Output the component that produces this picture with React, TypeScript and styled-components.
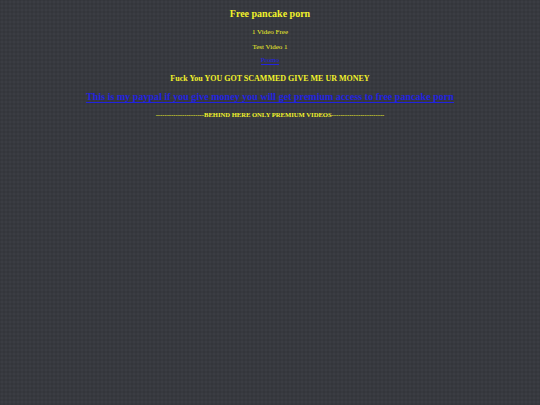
import React from "react";
import styled, { createGlobalStyle } from "styled-components";

const GlobalStyle = createGlobalStyle`
  html, body {
    margin: 0;
    padding: 0;
    background-color: #37393f;
  }
  body {
    min-height: 405px;
    font-family: "Liberation Serif", "Times New Roman", serif;
    background-image: radial-gradient(rgba(255, 255, 255, 0.02) 1px, transparent 1px),
      radial-gradient(rgba(0, 0, 0, 0.06) 1px, transparent 1px);
    background-size: 4px 4px, 4px 4px;
    background-position: 0 0, 2px 2px;
  }
`;

const Page = styled.div`
  display: flex;
  flex-direction: column;
  align-items: center;
  padding-top: 7px;
  text-align: center;
  color: #f2f22a;
`;

const Title = styled.h1`
  margin: 0 0 7px;
  font-size: 10px;
  line-height: 14px;
  font-weight: bold;
`;

const Line = styled.p<{ $gap?: number }>`
  margin: 0 0 ${(p) => p.$gap ?? 7}px;
  font-size: 7px;
  line-height: 8px;
`;

const Link = styled.a<{ $big?: boolean }>`
  display: inline-block;
  color: #2222e0;
  text-decoration: none;
  border-bottom: 1px solid #2222e0;
  line-height: ${(p) => (p.$big ? "11px" : "7px")};
  font-weight: ${(p) => (p.$big ? "bold" : "normal")};
  font-size: ${(p) => (p.$big ? "10px" : "7px")};
  letter-spacing: ${(p) => (p.$big ? "0.03px" : "0")};
`;

const Shout = styled.h3`
  margin: 0 0 6px;
  font-size: 8px;
  line-height: 10px;
  font-weight: bold;
`;

const BigLinkRow = styled.h2`
  margin: 0 0 8px;
  font-size: 10px;
  line-height: 13px;
`;

const Divider = styled.h4`
  margin: 0;
  font-size: 6.6px;
  line-height: 8px;
  font-weight: bold;
`;

export default function App() {
  return (
    <>
      <GlobalStyle />
      <Page>
        <Title>Free pancake porn</Title>
        <Line>1 Video Free</Line>
        <Line $gap={5}>Test Video 1</Line>
        <Line $gap={9}>
          <Link href="#">Promo</Link>
        </Line>
        <Shout>Fuck You YOU GOT SCAMMED GIVE ME UR MONEY</Shout>
        <BigLinkRow>
          <Link $big href="#">
            This is my paypal if you give money you will get premium access to free pancake porn
          </Link>
        </BigLinkRow>
        <Divider>
          ----------------------BEHIND HERE ONLY PREMIUM VIDEOS------------------------
        </Divider>
      </Page>
    </>
  );
}
